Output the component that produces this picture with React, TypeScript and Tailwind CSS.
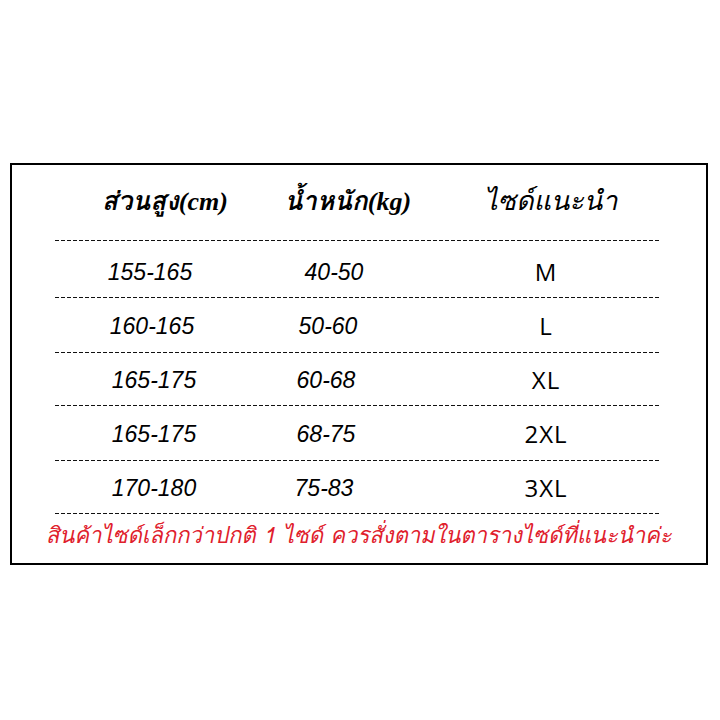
import React from "react";

const rows = [
  { h: "155-165", w: "40-50", s: "M", rh: "h-[56px]", p1: "pl-[0px]", p2: "pr-[8px]", pt: "pt-[6px]" },
  { h: "160-165", w: "50-60", s: "L", rh: "h-[54px]", p1: "pl-[4px]", p2: "pr-[20px]", pt: "pt-[2px]" },
  { h: "165-175", w: "60-68", s: "XL", rh: "h-[52px]", p1: "pl-[8px]", p2: "pr-[24px]", pt: "pt-[2px]" },
  { h: "165-175", w: "68-75", s: "2XL", rh: "h-[54px]", p1: "pl-[8px]", p2: "pr-[24px]", pt: "pt-[2px]" },
  { h: "170-180", w: "75-83", s: "3XL", rh: "h-[52px]", p1: "pl-[8px]", p2: "pr-[28px]", pt: "pt-[2px]" },
];

function Dash() {
  return (
    <div className="h-px w-[605px] bg-[repeating-linear-gradient(to_right,#111_0px,#111_4px,transparent_4px,transparent_6px)]" />
  );
}

export default function App() {
  return (
    <div className="w-[720px] h-[720px] bg-white pt-[163px] pl-[10px]">
      <div className="w-[698px] h-[402px] border-2 border-black">
        <div className="h-[75px] flex items-center pb-[2px] text-black font-['Liberation_Serif','Loma',serif] italic">
          <div className="w-[256px] pl-[50px] text-center font-bold text-[26px]">ส่วนสูง(cm)</div>
          <div className="w-[160px] text-center font-bold text-[26px]">น้ำหนัก(kg)</div>
          <div className="w-[246px] text-center text-[27px]">ไซด์แนะนำ</div>
        </div>
        <div className="pl-[43px] h-px">
          <Dash />
        </div>
        {rows.map((r, i) => (
          <div key={i}>
            <div className={`${r.rh} flex items-center ${r.pt}`}>
              <div className={`w-[276px] text-center italic font-['Liberation_Sans',sans-serif] text-[23px] ${r.p1}`}>
                {r.h}
              </div>
              <div className={`w-[100px] text-center italic font-['Liberation_Sans',sans-serif] text-[23px] ${r.p2}`}>
                {r.w}
              </div>
              <div className="w-[58px]" />
              <div className="w-[200px] text-center font-['Open_Sans',sans-serif] text-[24px] tracking-[1px]">
                {r.s}
              </div>
            </div>
            <div className="pl-[43px] h-px">
              <Dash />
            </div>
          </div>
        ))}
        <div className="h-[48px] flex items-center justify-center pb-[5px] text-[#e0202c] italic font-['Loma','Liberation_Sans',sans-serif] text-[22px]">
          สินค้าไซด์เล็กกว่าปกติ 1 ไซด์ ควรสั่งตามในตารางไซด์ที่แนะนำค่ะ
        </div>
      </div>
    </div>
  );
}
